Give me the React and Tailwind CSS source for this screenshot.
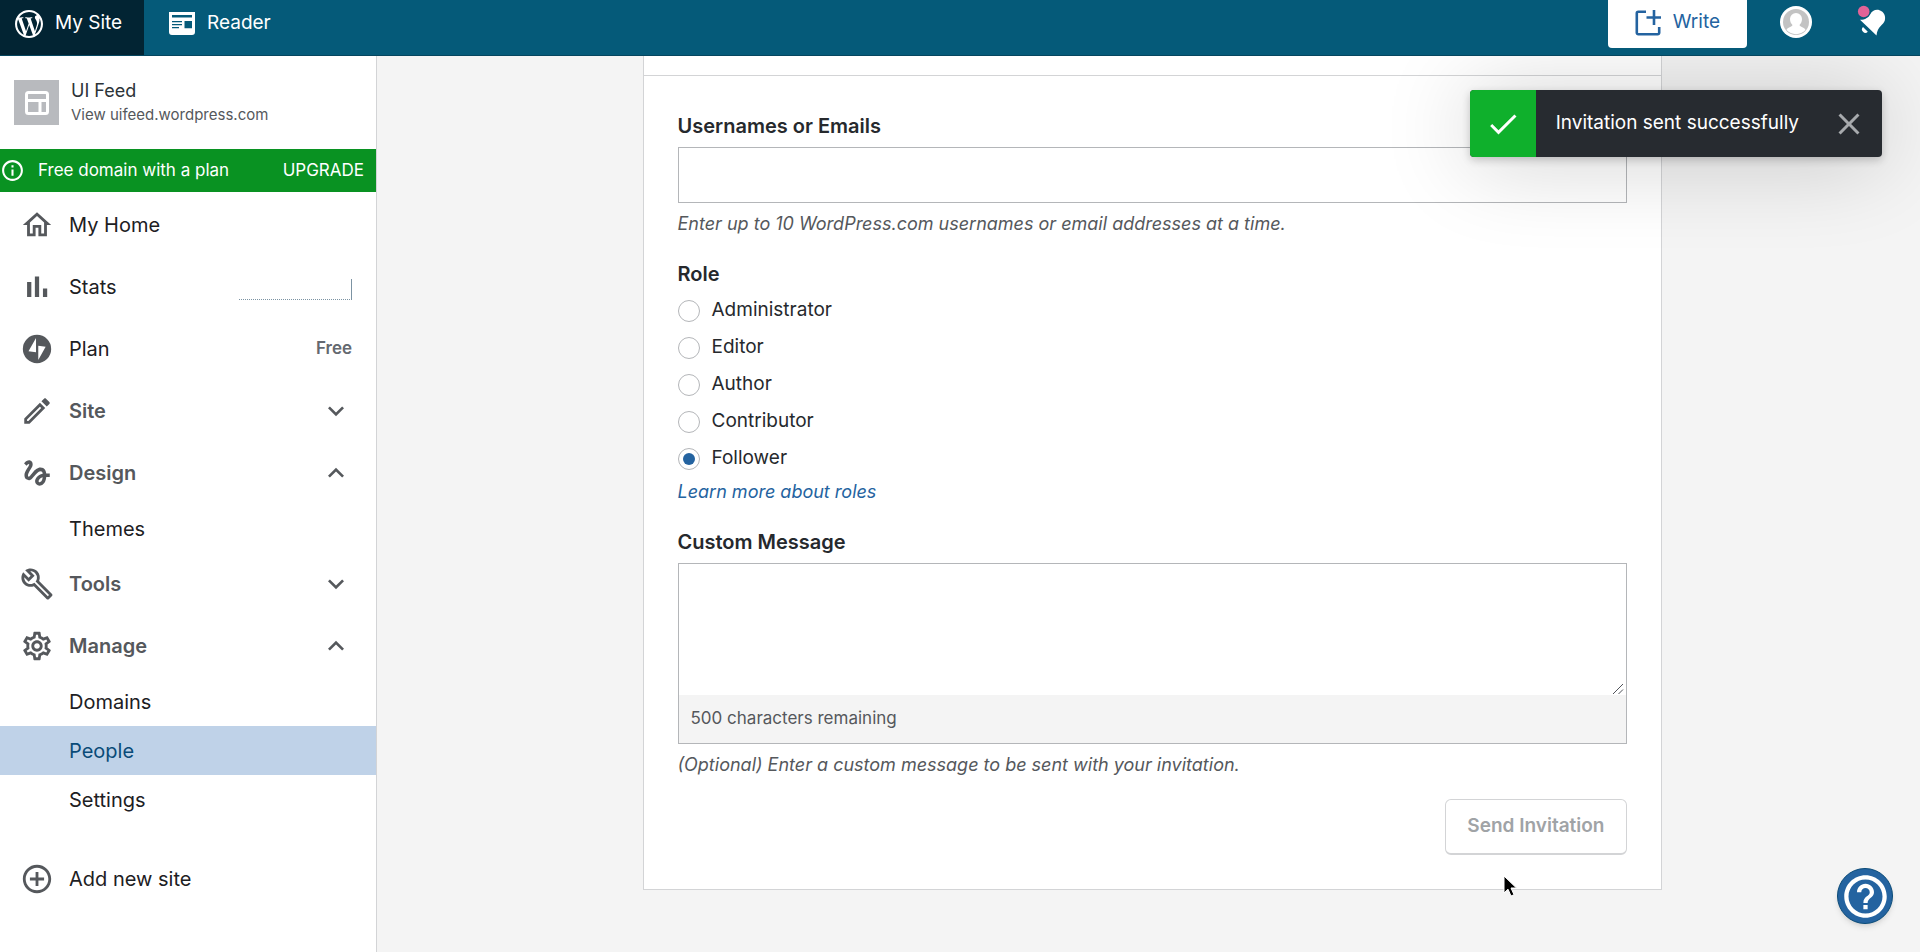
import { useState } from "react";
import {
  MdAddCircleOutline,
  MdCheck,
  MdClose,
  MdExpandLess,
  MdExpandMore,
  MdGesture,
  MdHelpOutline,
  MdInfoOutline,
  MdOutlineBuild,
  MdOutlineEdit,
  MdOutlineHome,
  MdOutlineSettings,
} from "react-icons/md";

const roles = ["Administrator", "Editor", "Author", "Contributor", "Follower"];

const WordPressIcon = () => (
  <svg viewBox="2 2 20 20" className="size-7" fill="currentColor" aria-hidden="true">
    <path d="M12 2C6.477 2 2 6.477 2 12s4.477 10 10 10 10-4.477 10-10S17.523 2 12 2zM3.5 12c0-1.232.264-2.402.736-3.459L8.291 19.65C5.456 18.272 3.5 15.365 3.5 12zm8.5 8.501c-.834 0-1.64-.123-2.4-.345l2.551-7.411 2.613 7.158c.017.042.038.08.061.117-.884.31-1.833.481-2.825.481zm1.172-12.486c.512-.027.973-.081.973-.081.458-.054.404-.727-.054-.701 0 0-1.377.108-2.266.108-.835 0-2.239-.108-2.239-.108-.459-.026-.512.674-.054.701 0 0 .434.054.892.081l1.324 3.629-1.86 5.579-3.096-9.208c.512-.027.973-.081.973-.081.458-.054.403-.727-.055-.701 0 0-1.376.108-2.265.108-.16 0-.347-.003-.547-.01C6.418 5.025 9.03 3.5 12 3.5c2.213 0 4.228.846 5.74 2.232-.037-.002-.072-.007-.111-.007-.835 0-1.427.727-1.427 1.509 0 .701.404 1.293.835 1.994.323.566.701 1.293.701 2.344 0 .727-.28 1.572-.647 2.748l-.848 2.833-3.072-9.138zm3.101 11.332l2.596-7.506c.485-1.213.646-2.182.646-3.045 0-.313-.021-.603-.057-.874.664 1.21 1.042 2.6 1.042 4.078 0 3.136-1.699 5.874-4.227 7.347z" />
  </svg>
);

const ReaderIcon = () => (
  <svg viewBox="0 0 26 23" className="w-[26px] h-[23px]" aria-hidden="true">
    <path
      fill="currentColor"
      fillRule="evenodd"
      d="M0 0h26v20a3 3 0 0 1-3 3H3a3 3 0 0 1-3-3zM3 3v2.6h20V3zM3 9v1.300h10V9zM3 12v1.300h10V12zM3 15v1.300h7V15zM15.500 9v7.300h7.500V9z"
    />
  </svg>
);

const WriteIcon = () => (
  <svg viewBox="0 0 26 26" className="w-[26px] h-[26px]" fill="none" stroke="currentColor" strokeWidth="2.6" aria-hidden="true">
    <path d="M11 1.8H3.3a1.5 1.5 0 0 0-1.5 1.5v19.4a1.5 1.5 0 0 0 1.5 1.5h19.4a1.5 1.5 0 0 0 1.5-1.5V17" />
    <path d="M19 0v15M11.5 7.5h14.5" />
  </svg>
);

const BellIcon = () => (
  <svg viewBox="0 0 30 32" className="w-[30px] h-8" aria-hidden="true">
    <path
      fill="#fff"
      d="M3 14.8C8 15 11 12.500 13 9.500C15 6 18.500 4 22.500 5.200C27 6.500 29 11 27.800 15.500C26.500 20 20.500 21 19.500 30.500Z"
    />
    <path fill="#fff" d="M6 22l4.800 4.800a3.300 3.300 0 0 1-4.800-4.800z" />
    <circle cx="6.700" cy="6.500" r="7" fill="#055a79" />
    <circle cx="6.700" cy="6.500" r="5.800" fill="#e26397" />
  </svg>
);

const AvatarIcon = () => (
  <svg viewBox="0 0 32 32" className="w-8 h-8" aria-hidden="true">
    <circle cx="16" cy="16" r="16" fill="#fff" />
    <circle cx="16" cy="16" r="13" fill="#c3c3c3" />
    <path fill="#fff" d="M16 7a6 6 0 0 1 6 6c0 2.500-1 4.500-2.500 6 .5 2 5 2 6 5a13 13 0 0 1-19 0c1-3 5.500-3 6-5C11 17.500 10 15.500 10 13a6 6 0 0 1 6-6z" />
  </svg>
);

const StatsIcon = ({ className }) => (
  <svg viewBox="0 0 24 24" className={className} fill="currentColor" aria-hidden="true">
    <path d="M5 8.500h3V19H5zM10.500 4.500h3V19h-3zM16.200 13h3v6h-3z" />
  </svg>
);

const PlanIcon = ({ className }) => (
  <svg viewBox="0 0 24 24" className={className} aria-hidden="true">
    <circle cx="12" cy="12" r="10" fill="currentColor" />
    <path fill="#fff" d="M11.300 4.200v10.100L6 13.600zM12.900 19.800V9.700l5.200.7z" />
  </svg>
);

const SiteIcon = () => (
  <span className="flex size-[45px] shrink-0 items-center justify-center bg-[#b8babe]">
    <svg viewBox="0 0 24 24" className="size-6" fill="none" stroke="#fff" strokeWidth="3" aria-hidden="true">
      <rect x="1.500" y="1.500" width="21" height="21" rx="2" />
      <path d="M2 9.500h20M15 9.500V22" />
    </svg>
  </span>
);

const menu = [
  { name: "My Home", icon: MdOutlineHome },
  { name: "Stats", icon: StatsIcon, chart: true },
  { name: "Plan", icon: PlanIcon, note: "Free" },
  { name: "Site", icon: MdOutlineEdit, items: [], open: false },
  { name: "Design", icon: MdGesture, items: ["Themes"], open: true },
  { name: "Tools", icon: MdOutlineBuild, items: [], open: false },
  { name: "Manage", icon: MdOutlineSettings, items: ["Domains", "People", "Settings"], open: true },
];

const Header = () => (
  <header className="relative z-10 flex h-14 shrink-0 border-b border-[#05465f] bg-[#055a79] text-[19px] text-white">
    <a href="#site" className="flex w-36 items-center gap-3 bg-[#022433] pb-2 pl-[15px]">
      <WordPressIcon />
      My Site
    </a>
    <a href="#reader" className="flex items-center gap-3 pb-2 pl-[25px]">
      <ReaderIcon />
      Reader
    </a>
    <div className="ml-auto flex items-start pr-[33px]">
      <button className="flex h-12 items-center gap-3 rounded-b bg-white px-[27px] pb-[3px] text-[#2463a0]">
        <WriteIcon />
        Write
      </button>
      <button aria-label="My profile" className="mt-[6px] ml-[33px]">
        <AvatarIcon />
      </button>
      <button aria-label="Notifications" className="mt-[5px] ml-[45px]">
        <BellIcon />
      </button>
    </div>
  </header>
);

const MenuItem = ({ item }) => {
  const [open, setOpen] = useState(item.open);
  const Icon = item.icon;

  if (!item.items) {
    return (
      <li>
        <a href="#menu" className="flex h-[62px] items-center pr-6 pl-5 text-[#1d2023]">
          <Icon className="size-[34px] text-[#55585c]" />
          <span className="ml-[15px]">{item.name}</span>
          {item.chart && (
            <span className="mt-1 ml-auto h-[21px] w-[113px] border-r border-b border-r-[#7c93a3] border-b-[#7c93a3] [border-bottom-style:dotted]" />
          )}
          {item.note && <span className="ml-auto text-[17px] font-semibold text-[#646970]">{item.note}</span>}
        </a>
      </li>
    );
  }

  return (
    <li>
      <button
        className="flex h-[62px] w-full items-center pr-6 pl-5 font-semibold text-[#55585c]"
        aria-expanded={open}
        onClick={() => setOpen(!open)}
      >
        <Icon className="size-[34px]" />
        <span className="ml-[15px]">{item.name}</span>
        {open ? <MdExpandLess className="ml-auto size-8" /> : <MdExpandMore className="ml-auto size-8" />}
      </button>
      {open && (
        <ul>
          {item.items.map((name) => (
            <li key={name}>
              <a
                href="#menu"
                className={
                  name === "People"
                    ? "flex h-[49px] items-center bg-[#bfd2e8] pl-[69px] text-[#0a4b78]"
                    : "flex h-[49px] items-center pl-[69px] text-[#1d2023]"
                }
              >
                {name}
              </a>
            </li>
          ))}
        </ul>
      )}
    </li>
  );
};

const Sidebar = () => (
  <aside className="w-[377px] shrink-0 border-r border-[#d3d4d6] bg-white text-xl">
    <div className="flex h-[93px] items-center gap-3 pl-[14px]">
      <SiteIcon />
      <div>
        <p className="text-lg leading-6 text-[#2c3338]">UI Feed</p>
        <a href="#view" className="block text-[15px] leading-6 text-[#55585c]">
          View uifeed.wordpress.com
        </a>
      </div>
    </div>
    <a href="#upgrade" className="mb-0.5 flex h-[43px] items-center bg-[#099222] pr-3 text-[17px] text-white">
      <MdInfoOutline className="size-[25px]" />
      <span className="ml-[13px]">Free domain with a plan</span>
      <span className="ml-auto">UPGRADE</span>
    </a>
    <nav>
      <ul>
        {menu.map((item) => (
          <MenuItem key={item.name} item={item} />
        ))}
      </ul>
      <a href="#new" className="mt-6 flex h-[62px] items-center pl-5 text-[#1d2023]">
        <MdAddCircleOutline className="size-[34px] text-[#55585c]" />
        <span className="ml-[15px]">Add new site</span>
      </a>
    </nav>
  </aside>
);

const InviteForm = () => {
  const [role, setRole] = useState("Follower");
  const [message, setMessage] = useState("");

  return (
    <form className="px-[34px] pt-9 pb-[34px]" onSubmit={(e) => e.preventDefault()}>
      <label htmlFor="usernames" className="block text-xl leading-7 font-semibold">
        Usernames or Emails
      </label>
      <input id="usernames" type="text" className="mt-[7px] block h-14 w-full border border-[#b4b6b9] bg-white px-4" />
      <p className="mt-[7px] text-lg text-[#55585c] italic">
        Enter up to 10 WordPress.com usernames or email addresses at a time.
      </p>

      <fieldset className="mt-[22px]">
        <legend className="text-xl leading-7 font-semibold">Role</legend>
        <div className="mt-1">
          {roles.map((name) => (
            <label key={name} className="flex h-[37px] items-center gap-3 text-[19px]">
              <input
                type="radio"
                name="role"
                checked={role === name}
                onChange={() => setRole(name)}
                className="flex size-[22px] appearance-none items-center justify-center rounded-full border border-[#b4b6b9] bg-white checked:before:size-3 checked:before:rounded-full checked:before:bg-[#2463a0]"
              />
              {name}
            </label>
          ))}
        </div>
      </fieldset>
      <a href="#roles" className="mt-px block text-lg text-[#2463a0] italic">
        Learn more about roles
      </a>

      <label htmlFor="message" className="mt-[22px] block text-xl leading-7 font-semibold">
        Custom Message
      </label>
      <div className="relative mt-[7px] border border-[#b4b6b9]">
        <textarea
          id="message"
          maxLength={500}
          value={message}
          onChange={(e) => setMessage(e.target.value)}
          className="block h-[131px] w-full resize-none bg-white px-3 py-2"
        />
        <svg viewBox="0 0 12 12" className="absolute right-0.5 bottom-12 size-3" stroke="#50535a" aria-hidden="true">
          <path d="M1 11L11 1M6.500 11L11 6.500" />
        </svg>
        <p className="flex h-12 items-center bg-[#f4f4f4] px-3 text-[17px] text-[#55585c]">
          {500 - message.length} characters remaining
        </p>
      </div>
      <p className="mt-[7px] text-lg text-[#55585c] italic">
        (Optional) Enter a custom message to be sent with your invitation.
      </p>

      <button
        disabled
        className="mt-5 ml-auto flex h-14 items-center rounded-md border border-b-2 border-[#d3d4d6] bg-white px-[21px] text-[19px] font-semibold text-[#a0a3a6]"
      >
        Send Invitation
      </button>
    </form>
  );
};

const Notice = ({ onClose }) => (
  <div
    role="status"
    className="absolute top-[90px] right-[38px] flex h-[67px] items-center overflow-hidden rounded bg-[#272b30] text-[19px] text-white shadow-[0_3px_8px_rgba(0,0,0,0.2),0_4px_90px_rgba(0,0,0,0.2)]"
  >
    <span className="flex h-full w-[66px] items-center justify-center bg-[#0fb02c]">
      <MdCheck className="size-9" />
    </span>
    <span className="ml-5">Invitation sent successfully</span>
    <button aria-label="Dismiss" className="mr-[15px] ml-8" onClick={onClose}>
      <MdClose className="size-9 text-[#a7aaad]" />
    </button>
  </div>
);

const Pointer = () => (
  <svg viewBox="0 0 14 22" className="absolute top-[875px] left-[1503px] h-[22px] w-[14px]" aria-hidden="true">
    <path d="M1 1v17l4-3.800 3 6.800 3-1.300-3-6.700h5.500z" stroke="#fff" strokeWidth="1" fill="#000" />
  </svg>
);

export default function App() {
  const [notice, setNotice] = useState(true);

  return (
    <div className="relative flex min-h-screen flex-col bg-[#f4f4f4] font-['Inter',sans-serif] text-[#26292d]">
      <Header />
      <div className="flex flex-1">
        <Sidebar />
        <main className="flex-1 pl-[7px]">
          <section className="mx-auto max-w-[1019px] border border-t-0 border-[#d3d4d6] bg-white">
            <div className="h-5 border-b border-[#d3d4d6]" />
            <InviteForm />
          </section>
        </main>
      </div>
      {notice && <Notice onClose={() => setNotice(false)} />}
      <button
        aria-label="Help"
        className="absolute right-[27px] bottom-[28px] flex size-14 items-center justify-center rounded-full border border-[#0a4b78] bg-[#2463a0] text-white shadow-md"
      >
        <MdHelpOutline className="size-[51px]" />
      </button>
      <Pointer />
    </div>
  );
}
